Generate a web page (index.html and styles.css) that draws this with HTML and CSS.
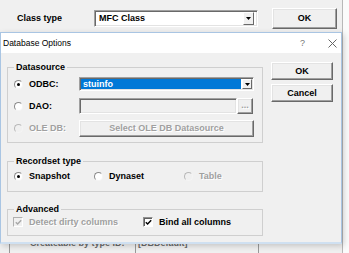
FILE: index.html
```html
<!DOCTYPE html>
<html>
<head>
<meta charset="utf-8">
<link rel="stylesheet" href="styles.css">
</head>
<body>
<div class="bgwin">
  <div class="bg-top">
    <span class="bg-label">Class type</span>
    <div class="field top-combo">
      <span class="top-val">MFC Class</span>
      <span class="ddbtn"><svg width="5" height="3" viewBox="0 0 5 3"><path d="M0 0H5L2.5 3Z" fill="#000"/></svg></span>
    </div>
    <div class="btn top-ok">OK</div>
  </div>
  <div class="bg-mid"></div>
  <div class="bg-bottom">
    <span class="bg-text">Createable by type ID:</span>
    <div class="bg-edit">[DBDefault]</div>
  </div>
</div>

<div class="dialog">
  <div class="titlebar">
    <span class="title">Database Options</span>
    <span class="help">?</span>
    <span class="close"><svg width="9" height="9" viewBox="0 0 9 9"><path d="M0.5 0.5L8.5 8.5M8.5 0.5L0.5 8.5" stroke="#666" stroke-width="1" fill="none"/></svg></span>
  </div>
  <div class="dbody">
    <div class="leftcol">
      <fieldset class="group ds">
        <legend>Datasource</legend>
        <div class="ds-row">
          <span class="opt"><span class="rb on"></span>ODBC:</span>
          <div class="field combo">
            <span class="sel">stuinfo</span>
            <span class="ddbtn"><svg width="5" height="3" viewBox="0 0 5 3"><path d="M0 0H5L2.5 3Z" fill="#000"/></svg></span>
          </div>
        </div>
        <div class="ds-row">
          <span class="opt"><span class="rb"></span>DAO:</span>
          <div class="dao">
            <div class="field edit"></div>
            <div class="btn dots">...</div>
          </div>
        </div>
        <div class="ds-row">
          <span class="opt dis"><span class="rb"></span>OLE DB:</span>
          <div class="btn selbtn dis">Select OLE DB Datasource</div>
        </div>
      </fieldset>

      <fieldset class="group rs">
        <legend>Recordset type</legend>
        <div class="rs-row">
          <span class="opt"><span class="rb on"></span>Snapshot</span>
          <span class="opt"><span class="rb"></span>Dynaset</span>
          <span class="opt dis"><span class="rb"></span>Table</span>
        </div>
      </fieldset>

      <fieldset class="group adv">
        <legend>Advanced</legend>
        <div class="adv-row">
          <span class="opt dis"><span class="cb dcb"><svg width="7" height="7" viewBox="0 0 7 7"><path d="M0.8 3.2L2.6 5L6.2 1.2" stroke="#a8a8a8" stroke-width="1.4" fill="none"/></svg></span>Detect dirty columns</span>
          <span class="opt"><span class="cb"><svg width="7" height="7" viewBox="0 0 7 7"><path d="M0.8 3.2L2.6 5L6.2 1.2" stroke="#000" stroke-width="1.4" fill="none"/></svg></span>Bind all columns</span>
        </div>
      </fieldset>
    </div>
    <div class="rightcol">
      <div class="btn dbtn">OK</div>
      <div class="btn dbtn">Cancel</div>
    </div>
  </div>
</div>
</body>
</html>
```

FILE: styles.css
```css
* { box-sizing: border-box; }
html, body { margin: 0; padding: 0; }
body {
  width: 349px;
  height: 253px;
  overflow: hidden;
  position: relative;
  background: #fbfbfb;
  font-family: "Liberation Sans", Arial, sans-serif;
  font-size: 9px;
  font-weight: bold;
  color: #000;
}

/* background window */
.bgwin {
  width: 343px;
  height: 253px;
  background: #f0f0f0;
  border-right: 1px solid #b8b8b8;
  display: flex;
  flex-direction: column;
}
.bg-top {
  height: 36px;
  display: flex;
  align-items: center;
  padding-left: 17px;
}
.bg-label { width: 77px; }
.top-combo {
  width: 164px;
  height: 17px;
  display: flex;
  align-items: center;
  background: #fff;
}
.top-val { flex: 1; padding-left: 2px; }
.top-combo .ddbtn { height: 13px; width: 11px; margin-right: 1px; }
.top-ok {
  margin-left: 14px;
  width: 65px;
  height: 21px;
}
.bg-mid { flex: 1; }
.bg-bottom {
  height: 15px;
  display: flex;
  align-items: flex-start;
  padding-left: 9px;
  color: #6a6a6a;
}
.bg-text {
  width: 126px;
  border-left: 1px solid #999;
  padding-left: 20px;
  height: 15px;
  line-height: 11px;
}
.bg-edit {
  width: 124px;
  height: 15px;
  line-height: 11px;
  border-left: 1px solid #999;
  border-right: 1px solid #999;
  padding-left: 2px;
}

/* generic 3D controls */
.field {
  border: 1px solid;
  border-color: #a0a0a0 #fff #fff #a0a0a0;
  box-shadow: inset 1px 1px 0 #696969, inset -1px -1px 0 #e3e3e3;
  padding: 2px;
}
.btn {
  display: flex;
  align-items: center;
  justify-content: center;
  background: #f0f0f0;
  border: 1px solid;
  border-color: #fff #696969 #696969 #fff;
  box-shadow: inset -1px -1px 0 #a0a0a0, inset 1px 1px 0 #e3e3e3;
}
.ddbtn {
  display: flex;
  align-items: center;
  justify-content: center;
  background: #f0f0f0;
  border: 1px solid;
  border-color: #fff #696969 #696969 #fff;
}
.dis { color: #a0a0a0; text-shadow: 1px 1px 0 #fff; }

/* dialog */
.dialog {
  position: absolute;
  left: 0;
  top: 32px;
  width: 342px;
  height: 212px;
  background: #f0f0f0;
  border: 1px solid #a9c5e3;
  border-bottom: 2px solid #cfe0f1;
  box-shadow: 2px 2px 6px rgba(0, 0, 0, 0.18);
  display: flex;
  flex-direction: column;
}
.titlebar {
  height: 20px;
  flex: none;
  background: #fff;
  display: flex;
  align-items: center;
  padding-left: 2px;
  font-weight: normal;
  font-size: 8.5px;
  color: #000;
}
.title { flex: 1; }
.help {
  color: #777;
  font-size: 9px;
  width: 28px;
}
.close {
  width: 13px;
  display: flex;
  align-items: center;
}
.dbody {
  flex: 1;
  display: flex;
  padding: 9px 0 0 6px;
}
.leftcol {
  width: 256px;
  display: flex;
  flex-direction: column;
}
.rightcol {
  margin-left: 8px;
  width: 62px;
  display: flex;
  flex-direction: column;
  gap: 4px;
}
.dbtn { height: 18px; }

/* group boxes */
.group {
  margin: 0;
  padding: 0 0 3px 0;
  border: 1px solid #cfcfcf;
  min-width: 0;
}
.group legend {
  margin-left: 6px;
  padding: 0 2px;
  line-height: 11px;
  height: 11px;
}
.rs { margin-top: 13px; padding-bottom: 6px; }
.adv { margin-top: 12px; padding-bottom: 6px; }

.opt {
  display: inline-flex;
  align-items: center;
  gap: 6px;
  white-space: nowrap;
}
.rb {
  width: 9px;
  height: 9px;
  flex: none;
  margin-left: 1px;
  border-radius: 50%;
  border: 1px solid;
  border-color: #8a8a8a #f4f4f4 #f4f4f4 #8a8a8a;
  background: #fff;
  position: relative;
}
.rb.on::after {
  content: "";
  position: absolute;
  left: 2px;
  top: 2px;
  width: 3px;
  height: 3px;
  border-radius: 50%;
  background: #000;
}
.dis .rb { background: #f0f0f0; border-color: #b8b8b8 #f4f4f4 #f4f4f4 #b8b8b8; }
.cb {
  width: 10px;
  height: 10px;
  flex: none;
  display: flex;
  align-items: center;
  justify-content: center;
  background: #fff;
  border: 1px solid;
  border-color: #909090 #fff #fff #909090;
  box-shadow: inset 1px 1px 0 #606060;
}
.cb.dcb { background: #f0f0f0; border-color: #b0b0b0 #fff #fff #b0b0b0; box-shadow: none; }

.ds-row {
  height: 22px;
  display: grid;
  grid-template-columns: 66px 175px;
  align-items: center;
  padding-left: 5px;
}
.combo {
  height: 14px;
  padding: 1px;
  display: flex;
  background: #fff;
}
.sel {
  flex: 1;
  background: #0078d7;
  color: #fff;
  padding-left: 2px;
  line-height: 10px;
}
.combo .ddbtn { width: 10px; margin-left: 1px; }
.dao { display: flex; height: 16px; }
.edit { width: 158px; height: 16px; background: #f0f0f0; }
.dots { width: 16px; height: 16px; color: #a0a0a0; text-shadow: 1px 1px 0 #fff; padding-bottom: 3px; }
.selbtn { width: 175px; height: 17px; }

.rs-row {
  height: 18px;
  display: grid;
  grid-template-columns: 80px 90px auto;
  align-items: center;
  padding-left: 5px;
}
.adv-row {
  height: 14px;
  display: grid;
  grid-template-columns: 130px auto;
  align-items: center;
  padding-left: 5px;
}
```
